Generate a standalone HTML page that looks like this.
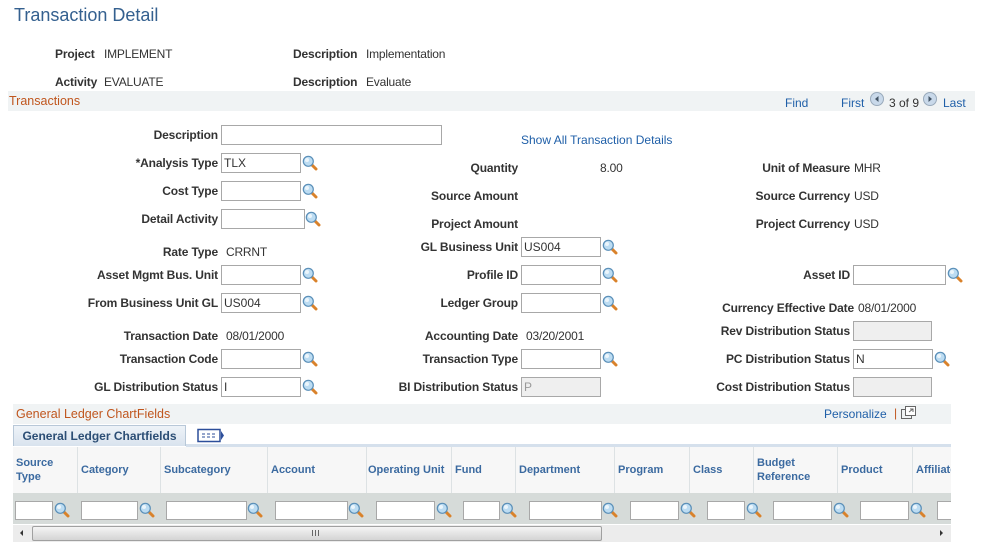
<!DOCTYPE html>
<html><head><meta charset="utf-8">
<style>
*{margin:0;padding:0;box-sizing:border-box}
body{width:984px;height:556px;background:#fff;font-family:"Liberation Sans",Arial,sans-serif;font-size:12px;color:#333;position:relative;overflow:hidden}
.a{position:absolute;white-space:nowrap}
.l{position:absolute;white-space:nowrap;font-weight:bold;letter-spacing:-0.15px;text-align:right;line-height:14px}
.v{position:absolute;white-space:nowrap;line-height:14px;letter-spacing:-0.2px}
.i{position:absolute;height:20px;border:1px solid #a8a8a8;background:#fff;font-size:12px;line-height:18px;padding-left:2px;color:#333}
.d{background:#efefef;color:#999}
.m{position:absolute;width:16px;height:16px}
.lnk{color:#1f5fa8}
.th{position:absolute;top:447px;height:46px;border-left:1px solid #dde2e4;font-weight:bold;color:#3b6aa0;font-size:11px;padding:0 3px;display:flex;align-items:center;line-height:14px;white-space:nowrap;overflow:hidden}
.fi{position:absolute;top:501px;height:19px;border:1px solid #a8a8a8;background:#fff}
</style></head><body>
<svg width="0" height="0" style="position:absolute"><defs>
<symbol id="mg" viewBox="0 0 16 16">
<line x1="9" y1="9" x2="14" y2="14" stroke="#d9822b" stroke-width="3" stroke-linecap="round"/>
<circle cx="6.3" cy="6.3" r="5" fill="#bcdcf2" stroke="#5a8fb8" stroke-width="1.2"/>
<circle cx="5" cy="5" r="2" fill="#fff" opacity=".7"/>
</symbol></defs></svg>

<div class="a" style="left:14px;top:5px;font-size:18px;color:#34608f">Transaction Detail</div>
<div class="l" style="left:55px;top:47px">Project</div><div class="v" style="left:104px;top:47px">IMPLEMENT</div>
<div class="l" style="left:55px;top:75px">Activity</div><div class="v" style="left:104px;top:75px">EVALUATE</div>
<div class="l" style="left:293px;top:47px">Description</div><div class="v" style="left:366px;top:47px">Implementation</div>
<div class="l" style="left:293px;top:75px">Description</div><div class="v" style="left:366px;top:75px">Evaluate</div>

<div class="a" style="left:8px;top:91px;width:967px;height:20px;background:#f0f3f4"></div>
<div class="a" style="left:9px;top:94px;color:#c0561e;font-size:12.5px">Transactions</div>
<div class="a lnk" style="left:785px;top:96px">Find</div>
<div class="a lnk" style="left:841px;top:96px">First</div>
<svg class="a" style="left:870px;top:92px" width="14" height="14" viewBox="0 0 14 14"><circle cx="7" cy="7" r="6.5" fill="#c9d9ea" stroke="#9ab"/><path d="M8.5 4v6L5 7z" fill="#456"/></svg>
<div class="a" style="left:889px;top:96px">3 of 9</div>
<svg class="a" style="left:923px;top:92px" width="14" height="14" viewBox="0 0 14 14"><circle cx="7" cy="7" r="6.5" fill="#c9d9ea" stroke="#9ab"/><path d="M5.5 4v6L9 7z" fill="#456"/></svg>
<div class="a lnk" style="left:943px;top:96px">Last</div>

<div class="l" style="right:766px;top:128px">Description</div><div class="i" style="left:221px;top:125px;width:221px"></div>
<div class="a lnk" style="left:521px;top:133px">Show All Transaction Details</div>

<div class="l" style="right:766px;top:156px">*Analysis Type</div><div class="i" style="left:221px;top:153px;width:80px">TLX</div><svg class="m" style="left:302px;top:155px"><use href="#mg"/></svg>
<div class="l" style="right:766px;top:184px">Cost Type</div><div class="i" style="left:221px;top:181px;width:80px"></div><svg class="m" style="left:302px;top:183px"><use href="#mg"/></svg>
<div class="l" style="right:766px;top:212px">Detail Activity</div><div class="i" style="left:221px;top:209px;width:84px"></div><svg class="m" style="left:305px;top:211px"><use href="#mg"/></svg>
<div class="l" style="right:766px;top:245px">Rate Type</div><div class="v" style="left:226px;top:245px">CRRNT</div>
<div class="l" style="right:766px;top:268px">Asset Mgmt Bus. Unit</div><div class="i" style="left:221px;top:265px;width:80px"></div><svg class="m" style="left:302px;top:267px"><use href="#mg"/></svg>
<div class="l" style="right:766px;top:296px">From Business Unit GL</div><div class="i" style="left:221px;top:293px;width:80px">US004</div><svg class="m" style="left:302px;top:295px"><use href="#mg"/></svg>
<div class="l" style="right:766px;top:329px">Transaction Date</div><div class="v" style="left:226px;top:329px">08/01/2000</div>
<div class="l" style="right:766px;top:352px">Transaction Code</div><div class="i" style="left:221px;top:349px;width:80px"></div><svg class="m" style="left:302px;top:351px"><use href="#mg"/></svg>
<div class="l" style="right:766px;top:380px">GL Distribution Status</div><div class="i" style="left:221px;top:377px;width:80px">I</div><svg class="m" style="left:302px;top:379px"><use href="#mg"/></svg>

<div class="l" style="right:466px;top:161px">Quantity</div><div class="v" style="left:600px;top:161px">8.00</div>
<div class="l" style="right:466px;top:189px">Source Amount</div>
<div class="l" style="right:466px;top:217px">Project Amount</div>
<div class="l" style="right:466px;top:240px">GL Business Unit</div><div class="i" style="left:521px;top:237px;width:80px">US004</div><svg class="m" style="left:602px;top:239px"><use href="#mg"/></svg>
<div class="l" style="right:466px;top:268px">Profile ID</div><div class="i" style="left:521px;top:265px;width:80px"></div><svg class="m" style="left:602px;top:267px"><use href="#mg"/></svg>
<div class="l" style="right:466px;top:296px">Ledger Group</div><div class="i" style="left:521px;top:293px;width:80px"></div><svg class="m" style="left:602px;top:295px"><use href="#mg"/></svg>
<div class="l" style="right:466px;top:329px">Accounting Date</div><div class="v" style="left:526px;top:329px">03/20/2001</div>
<div class="l" style="right:466px;top:352px">Transaction Type</div><div class="i" style="left:521px;top:349px;width:80px"></div><svg class="m" style="left:602px;top:351px"><use href="#mg"/></svg>
<div class="l" style="right:466px;top:380px">BI Distribution Status</div><div class="i d" style="left:521px;top:377px;width:80px">P</div>

<div class="l" style="right:134px;top:161px">Unit of Measure</div><div class="v" style="left:854px;top:161px">MHR</div>
<div class="l" style="right:134px;top:189px">Source Currency</div><div class="v" style="left:854px;top:189px">USD</div>
<div class="l" style="right:134px;top:217px">Project Currency</div><div class="v" style="left:854px;top:217px">USD</div>
<div class="l" style="right:134px;top:268px">Asset ID</div><div class="i" style="left:853px;top:265px;width:93px"></div><svg class="m" style="left:947px;top:267px"><use href="#mg"/></svg>
<div class="l" style="right:130px;top:301px">Currency Effective Date</div><div class="v" style="left:858px;top:301px">08/01/2000</div>
<div class="l" style="right:134px;top:324px">Rev Distribution Status</div><div class="i d" style="left:853px;top:321px;width:79px"></div>
<div class="l" style="right:134px;top:352px">PC Distribution Status</div><div class="i" style="left:853px;top:349px;width:80px">N</div><svg class="m" style="left:934px;top:351px"><use href="#mg"/></svg>
<div class="l" style="right:134px;top:380px">Cost Distribution Status</div><div class="i d" style="left:853px;top:377px;width:79px"></div>

<div class="a" style="left:13px;top:404px;width:938px;height:20px;background:#f0f3f4"></div>
<div class="a" style="left:16px;top:407px;color:#c0561e;font-size:12.5px">General Ledger ChartFields</div>
<div class="a lnk" style="left:824px;top:407px">Personalize</div>
<div class="a" style="left:894px;top:406px;color:#c0561e">|</div>
<svg class="a" style="left:901px;top:406px" width="15" height="13" viewBox="0 0 15 13"><rect x="0.5" y="3.5" width="10" height="9" fill="none" stroke="#666"/><rect x="4.5" y="0.5" width="10" height="9" fill="#fff" stroke="#666"/><path d="M8 6l4-3M9 3h3v3" stroke="#666" fill="none"/></svg>
<div class="a" style="left:13px;top:425px;width:173px;height:21px;background:linear-gradient(#eef3f8,#d9e3ee);border:1px solid #b8c8d8;border-bottom:none;font-weight:bold;color:#2c4e75;font-size:12px;text-align:center;line-height:20px">General Ledger Chartfields</div>
<svg class="a" style="left:197px;top:428px" width="28" height="15" viewBox="0 0 28 15"><rect x="1" y="1.5" width="22" height="12" fill="#fff" stroke="#2c4e9a" stroke-width="1.5"/><path d="M5 6h3M10 6h3M15 6h3M5 9h3M10 9h3M15 9h3" stroke="#2c4e9a"/><path d="M24 3l3 4.5-3 4.5z" fill="#2c4e9a"/></svg>
<div class="a" style="left:186px;top:444px;width:765px;height:3px;background:#d5e0ec"></div>
<div class="a" style="left:13px;top:447px;width:938px;height:46px;background:#f7f7f7"></div>
<div class="th" style="left:13px;width:64px;border-left:none;white-space:normal">Source<br>Type</div>
<div class="th" style="left:77px;width:83px">Category</div>
<div class="th" style="left:160px;width:107px">Subcategory</div>
<div class="th" style="left:267px;width:99px">Account</div>
<div class="th" style="left:366px;width:85px;padding:0 1px">Operating Unit</div>
<div class="th" style="left:451px;width:64px">Fund</div>
<div class="th" style="left:515px;width:99px">Department</div>
<div class="th" style="left:614px;width:75px">Program</div>
<div class="th" style="left:689px;width:64px">Class</div>
<div class="th" style="left:753px;width:84px;white-space:normal">Budget<br>Reference</div>
<div class="th" style="left:837px;width:75px">Product</div>
<div class="th" style="left:912px;width:39px">Affiliate</div>
<div class="a" style="left:13px;top:493px;width:938px;height:31px;background:#d6dbd9"></div>
<div class="fi" style="left:15px;width:38px"></div><svg class="m" style="left:54px;top:502px"><use href="#mg"/></svg>
<div class="fi" style="left:81px;width:57px"></div><svg class="m" style="left:139px;top:502px"><use href="#mg"/></svg>
<div class="fi" style="left:166px;width:81px"></div><svg class="m" style="left:247px;top:502px"><use href="#mg"/></svg>
<div class="fi" style="left:275px;width:73px"></div><svg class="m" style="left:348px;top:502px"><use href="#mg"/></svg>
<div class="fi" style="left:376px;width:59px"></div><svg class="m" style="left:436px;top:502px"><use href="#mg"/></svg>
<div class="fi" style="left:463px;width:37px"></div><svg class="m" style="left:501px;top:502px"><use href="#mg"/></svg>
<div class="fi" style="left:529px;width:73px"></div><svg class="m" style="left:602px;top:502px"><use href="#mg"/></svg>
<div class="fi" style="left:630px;width:49px"></div><svg class="m" style="left:680px;top:502px"><use href="#mg"/></svg>
<div class="fi" style="left:707px;width:38px"></div><svg class="m" style="left:746px;top:502px"><use href="#mg"/></svg>
<div class="fi" style="left:773px;width:59px"></div><svg class="m" style="left:833px;top:502px"><use href="#mg"/></svg>
<div class="fi" style="left:860px;width:49px"></div><svg class="m" style="left:910px;top:502px"><use href="#mg"/></svg>
<div class="fi" style="left:937px;width:14px;border-right:none"></div>
<div class="a" style="left:13px;top:525px;width:938px;height:17px;background:#ececec"></div>
<div class="a" style="left:32px;top:526px;width:570px;height:15px;background:linear-gradient(#f4f4f4,#d4d4d4);border:1px solid #a0a0a0;border-radius:2px"></div>
<div class="a" style="left:312px;top:530px;width:7px;height:6px;border-left:1px solid #666;border-right:1px solid #666"></div>
<div class="a" style="left:315px;top:530px;width:1px;height:6px;background:#666"></div>
<div class="a" style="left:20px;top:530px;width:0;height:0;border-top:3px solid transparent;border-bottom:3px solid transparent;border-right:3px solid #333"></div>
<div class="a" style="left:940px;top:530px;width:0;height:0;border-top:3px solid transparent;border-bottom:3px solid transparent;border-left:3px solid #333"></div>
</body></html>
